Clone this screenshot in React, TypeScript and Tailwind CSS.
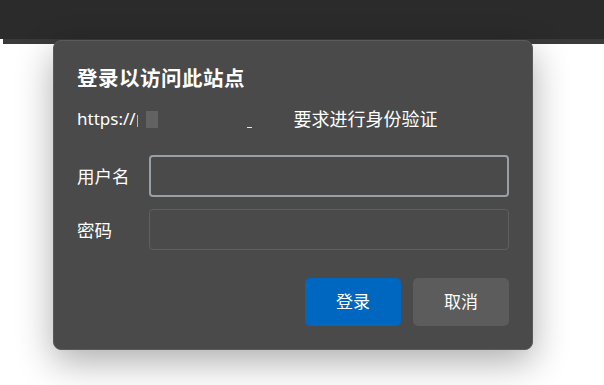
import React from 'react';

const FONT = '"Segoe UI", "Noto Sans", "Noto Sans CJK SC", sans-serif';

export default function App() {
  return (
    <div className="relative w-[604px] h-[385px] bg-white overflow-hidden" style={{ fontFamily: FONT }}>
      {/* Browser top bar */}
      <div className="h-[39px] bg-[#2b2b2b]"></div>
      <div className="h-[5px] ml-[3px] bg-[#3a3a3a]"></div>

      {/* Auth dialog */}
      <div className="absolute left-[53px] top-[40px] w-[480px] h-[310px] rounded-[8px] bg-[#4a4a4a] border border-[#5a5a5a] shadow-[0_12px_36px_rgba(0,0,0,0.32)] px-[23px] pt-[23px] pb-[23px] flex flex-col text-white">
        <h1 className="text-[20.5px] leading-[28px] font-bold tracking-[0.5px]">登录以访问此站点</h1>

        <div className="mt-[15px] h-[24px] flex items-center text-[17px] leading-[24px]">
          <span>https://</span>
          <span className="inline-block ml-[1px] w-[1px] h-[12px] mt-[4px] bg-[#b8b8b8]"></span>
          <span className="inline-block ml-[8px] w-[12px] h-[17px] bg-[#626262]"></span>
          <span className="inline-block ml-[89px] mt-[16px] w-[5px] h-[1px] bg-[#e8e8e8]"></span>
          <span className="ml-[42px] text-[18px]">要求进行身份验证</span>
        </div>

        <div className="mt-[24px] flex items-center">
          <label className="w-[72px] text-[17.5px] leading-[24px]">用户名</label>
          <div className="w-[360px] h-[42px] rounded-[4px] border-2 border-[#9a9fa6] bg-[#4a4a4a]"></div>
        </div>

        <div className="mt-[12px] flex items-center">
          <label className="w-[72px] text-[17.5px] leading-[24px]">密码</label>
          <div className="w-[360px] h-[41px] rounded-[4px] border border-[#5f5f5f] bg-[#4a4a4a]"></div>
        </div>

        <div className="mt-[28px] flex justify-end gap-[12px]">
          <button className="w-[96px] h-[48px] rounded-[5px] bg-[#0067c0] text-[17px] text-white">登录</button>
          <button className="w-[96px] h-[48px] rounded-[5px] bg-[#5c5c5c] text-[17px] text-white">取消</button>
        </div>
      </div>
    </div>
  );
}
